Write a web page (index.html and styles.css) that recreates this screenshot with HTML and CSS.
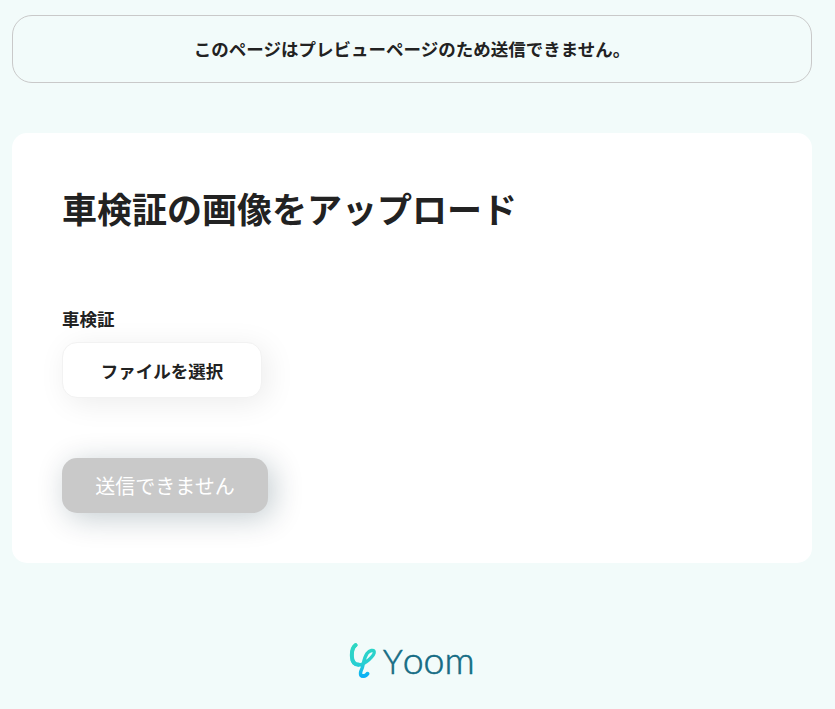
FILE: index.html
```html
<!DOCTYPE html>
<html lang="ja">
<head>
    <meta charset="UTF-8">
    <meta name="viewport" content="width=device-width, initial-scale=1.0">
    <title>車検証の画像をアップロード</title>
    <link rel="stylesheet" href="styles.css">
</head>
<body>
    <div class="container">
        <div class="notice">このページはプレビューページのため送信できません。</div>
        <form class="card">
            <h1 class="title">車検証の画像をアップロード</h1>
            <div class="field">
                <div class="label">車検証</div>
                <button type="button" class="fileBtn">ファイルを選択</button>
            </div>
            <button type="submit" class="sendBtn" disabled>送信できません</button>
        </form>
        <div class="footer">
            <svg class="mark" width="30" height="38" viewBox="0 0 30 38" fill="none">
                <defs>
                    <linearGradient id="markColor" x1="10" y1="0" x2="15" y2="38" gradientUnits="userSpaceOnUse">
                        <stop offset="0" stop-color="#2fd8bf"/>
                        <stop offset="0.6" stop-color="#28cfd2"/>
                        <stop offset="0.95" stop-color="#08aef8"/>
                    </linearGradient>
                </defs>
                <path d="M7.800 4C4.500 6.500 3.700 12 3.800 15.500C4 21 6.500 24 10.500 24C17 24 26.500 14.500 26.200 11C26 8 21.500 9.500 19 12.500C15.500 17.500 15.800 23 14 27.500C12.500 30.500 11.500 34 14 35" stroke="url(#markColor)" stroke-width="3.400" stroke-linecap="round" stroke-linejoin="round"/>
                <path d="M7.500 4.200C4.500 6.500 3.700 12 3.900 15.500C4.200 20.500 6.500 23.500 10.500 23.500M13.500 34.600Q17.500 35.800 19.400 32.800" stroke="url(#markColor)" stroke-width="4" stroke-linecap="round"/>
            </svg>
            <span class="brand">Yoom</span>
        </div>
    </div>
</body>
</html>
```
FILE: styles.css
```css
body{
    margin: 0;
    background-color: #f2fbfa;
    color: #222;
    font-family: "Noto Sans CJK JP", sans-serif;
}
.container{
    width: 800px;
    padding: 15px 0 0 12px;
}
.notice{
    box-sizing: border-box;
    height: 68px;
    border: 1px solid #c9c9c9;
    border-radius: 20px;
    font-size: 17.5px;
    font-weight: bold;
    line-height: 66px;
    text-align: center;
}
.card{
    box-sizing: border-box;
    height: 430px;
    margin-top: 50px;
    padding: 50px;
    background-color: white;
    border-radius: 15px;
}
.title{
    margin: 0;
    font-size: 35px;
    line-height: 50px;
}
.field{
    margin-top: 72px;
}
.label{
    height: 37px;
    font-size: 17.5px;
    font-weight: bold;
    line-height: 28px;
}
.fileBtn{
    display: block;
    width: 200px;
    height: 56px;
    padding: 0;
    border: 1px solid #f2f2f2;
    border-radius: 15px;
    background-color: white;
    color: #222;
    font-family: inherit;
    font-size: 17.5px;
    font-weight: bold;
    box-shadow: 5px 5px 30px rgba(0, 0, 0, 0.08);
}
.sendBtn{
    display: block;
    width: 206px;
    height: 55px;
    margin-top: 60px;
    padding: 0;
    border: none;
    border-radius: 15px;
    background-color: #c9c9c9;
    color: white;
    font-family: inherit;
    font-size: 20px;
    box-shadow: 5px 5px 30px rgba(0, 40, 60, 0.24);
}
.footer{
    display: flex;
    margin-top: 78px;
    padding-left: 336px;
}
.mark{
    flex: none;
}
.brand{
    margin-left: 5px;
    color: #146c84;
    font-family: Lato, sans-serif;
    font-size: 37.5px;
    font-weight: 300;
    line-height: 38px;
    -webkit-text-stroke: 0.6px #146c84;
}
.brand::first-letter{
    font-size: 33px;
}
```
